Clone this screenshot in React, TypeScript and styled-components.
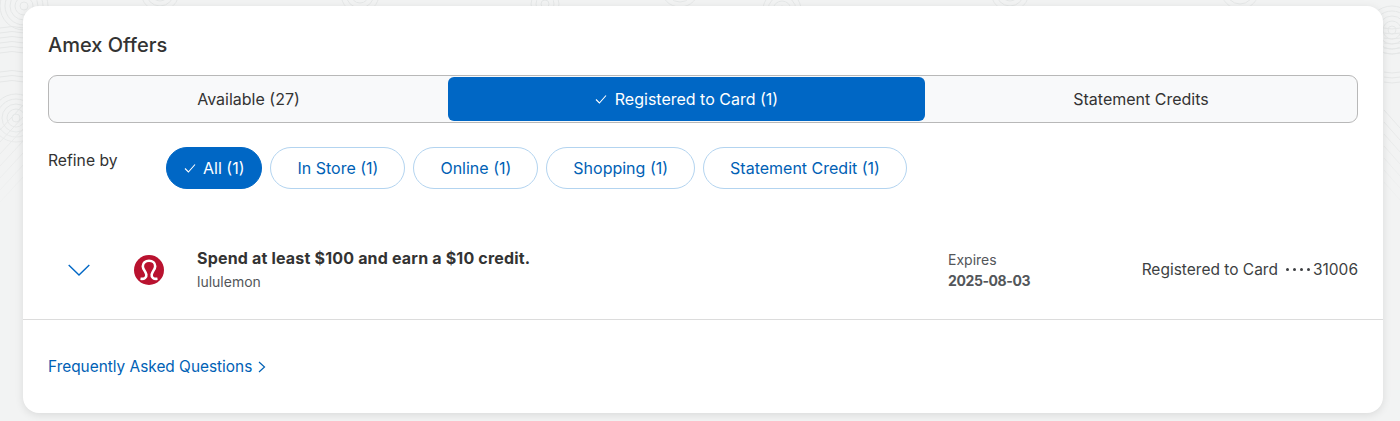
import styled, { createGlobalStyle } from "styled-components";

const GlobalStyle = createGlobalStyle`
  html, body {
    margin: 0;
    padding: 0;
    background: #f2f3f3;
  }
  body {
    font-family: Inter, "Liberation Sans", sans-serif;
    color: #333;
  }
`;

const Page = styled.div`
  position: relative;
  width: 1400px;
  height: 421px;
  overflow: hidden;
  padding: 6px 17px 8px 23px;
  box-sizing: border-box;
`;

const Backdrop = styled.svg`
  position: absolute;
  left: 0;
  top: 0;
  width: 1400px;
  height: 421px;
  -webkit-mask-image: linear-gradient(to bottom, #000 110px, transparent 215px);
  mask-image: linear-gradient(to bottom, #000 110px, transparent 215px);
`;

const Card = styled.div`
  position: relative;
  height: 407px;
  box-sizing: border-box;
  background: #fff;
  border-radius: 16px;
  box-shadow: 0 2px 8px rgba(0, 0, 0, 0.1);
  padding-top: 28px;
`;

const Inset = styled.div`
  padding: 0 25px;
`;

const Title = styled.h2`
  margin: 0 0 19px;
  font-size: 20px;
  line-height: 22px;
  font-weight: 500;
  color: #333;
`;

const Tabs = styled.div`
  display: grid;
  grid-template-columns: 399px 477px 1fr;
  height: 48px;
  box-sizing: border-box;
  border: 1px solid #b8b8b8;
  border-radius: 9px;
  background: #f8f9fa;
  padding: 1px 0;
`;

const Tab = styled.div<{ $active?: boolean }>`
  display: flex;
  align-items: center;
  justify-content: center;
  gap: 8px;
  font-size: 16px;
  border-radius: 6px;
  background: ${(p) => (p.$active ? "#0067c5" : "transparent")};
  color: ${(p) => (p.$active ? "#fff" : "#333")};
`;

const Refine = styled.div`
  display: flex;
  margin-top: 24px;
`;

const RefineLabel = styled.div`
  width: 118px;
  font-size: 15.7px;
  line-height: 18px;
  padding-top: 5px;
`;

const Chips = styled.div`
  display: flex;
  gap: 8px;
`;

const Chip = styled.div<{ $active?: boolean }>`
  display: flex;
  align-items: center;
  gap: 7px;
  height: 42px;
  box-sizing: border-box;
  padding: 0 ${(p) => (p.$active ? "17px" : "26px")};
  font-size: 16px;
  border-radius: 21px;
  border: 1px solid ${(p) => (p.$active ? "#0067c5" : "#b3d4f0")};
  background: ${(p) => (p.$active ? "#0067c5" : "#fff")};
  color: ${(p) => (p.$active ? "#fff" : "#0061b5")};
`;

const OfferRow = styled.div`
  display: flex;
  align-items: center;
  height: 101px;
  margin-top: 30px;
  padding: 0 25px;
  border-bottom: 1px solid #dcdcdc;
  box-sizing: border-box;
`;

const Toggle = styled.div`
  width: 86px;
  display: flex;
  padding: 2px 0 0 20px;
  box-sizing: border-box;
`;

const Logo = styled.div`
  width: 63px;
  display: flex;
  padding-top: 2px;
`;

const OfferBody = styled.div`
  flex: 1;
`;

const OfferTitle = styled.div`
  font-size: 16px;
  line-height: 20px;
  font-weight: 700;
  letter-spacing: 0.18px;
  color: #333;
`;

const Merchant = styled.div`
  font-size: 14px;
  line-height: 16px;
  margin-top: 6px;
  color: #53565a;
`;

const Expiry = styled.div`
  width: 194px;
  padding-top: 3px;
`;

const ExpiryLabel = styled.div`
  font-size: 14px;
  line-height: 16px;
  color: #53565a;
`;

const ExpiryDate = styled.div`
  font-size: 14px;
  line-height: 18px;
  margin-top: 4px;
  font-weight: 700;
  letter-spacing: -0.4px;
  color: #53565a;
`;

const Status = styled.div`
  width: 216px;
  display: flex;
  justify-content: flex-end;
  align-items: center;
  font-size: 15.5px;
  color: #3d3f42;
  white-space: nowrap;
`;

const Dots = styled.span`
  display: inline-flex;
  gap: 4px;
  margin: 1px 3px 0 8px;
`;

const Dot = styled.i`
  width: 3px;
  height: 3px;
  border-radius: 50%;
  background: #3d3f42;
`;

const FaqLink = styled.a`
  display: flex;
  align-items: center;
  gap: 6px;
  margin-top: 37px;
  font-size: 15.4px;
  line-height: 20px;
  color: #0061b5;
  text-decoration: none;
`;

const Check = ({ size = 12 }: { size?: number }) => (
  <svg width={size} height={size} viewBox="0 0 12 12" fill="none">
    <path d="M1 6.500 4.400 10 11 2.500" stroke="#fff" strokeWidth="1.1" />
  </svg>
);

// faint engraved pattern behind the card, only visible in the margins
const swirls = [
  { cx: 24, cy: 6, n: 5 },
  { cx: 160, cy: -8, n: 4 },
  { cx: 360, cy: -6, n: 4 },
  { cx: 545, cy: 4, n: 3 },
  { cx: 680, cy: -12, n: 4 },
  { cx: 782, cy: 10, n: 4 },
  { cx: 1010, cy: -8, n: 4 },
  { cx: 1240, cy: -10, n: 4 },
  { cx: 1392, cy: 30, n: 5 },
  { cx: 16, cy: 118, n: 5 },
];

const bands = [28, 33, 38, 43, 48, 53, 72, 77, 82];
const hatches = [130, 142, 154, 166, 178, 190, 202];

const refineOptions = ["In Store (1)", "Online (1)", "Shopping (1)", "Statement Credit (1)"];

const App = () => {
  return (
    <>
      <GlobalStyle />
      <Page>
        <Backdrop viewBox="0 0 1400 421" fill="none" stroke="#e5e7e7" strokeWidth="1">
          {swirls.map((a) =>
            Array.from({ length: a.n }).map((_, i) => (
              <circle key={`${a.cx}-${i}`} cx={a.cx} cy={a.cy} r={4 + i * 5} />
            ))
          )}
          {bands.map((y) => (
            <path key={y} d={`M0 ${y}q12 -3 24 0M1384 ${y}q8 2 16 0`} />
          ))}
          {hatches.map((y) => (
            <path key={y} d={`M0 ${y}l24 -26M1384 ${y - 20}l16 18`} />
          ))}
        </Backdrop>
        <Card>
          <Inset>
            <Title>Amex Offers</Title>
            <Tabs>
              <Tab>Available (27)</Tab>
              <Tab $active>
                <Check />
                Registered to Card (1)
              </Tab>
              <Tab>Statement Credits</Tab>
            </Tabs>
            <Refine>
              <RefineLabel>Refine by</RefineLabel>
              <Chips>
                <Chip $active>
                  <Check />
                  All (1)
                </Chip>
                {refineOptions.map((label) => (
                  <Chip key={label}>{label}</Chip>
                ))}
              </Chips>
            </Refine>
          </Inset>
          <OfferRow>
            <Toggle>
              <svg width="22" height="12" viewBox="0 0 22 12" fill="none">
                <path d="M0.700 1 11 11 21.300 1" stroke="#0067c5" strokeWidth="1.400" />
              </svg>
            </Toggle>
            <Logo>
              <svg width="30" height="30" viewBox="0 0 30 30" fill="none">
                <circle cx="15" cy="15" r="15" fill="#b9122f" />
                <path
                  d="M6.500 23.800C10.500 24.300 12.800 22.500 12.300 19.500 11.700 16.200 8.800 14.500 8.800 11.200 8.800 7.800 11.500 5.700 15 5.700S21.200 7.800 21.200 11.200C21.200 14.500 18.300 16.200 17.700 19.500 17.200 22.500 19.500 24.300 23.500 23.800"
                  stroke="#fff"
                  strokeWidth="2.600"
                />
              </svg>
            </Logo>
            <OfferBody>
              <OfferTitle>Spend at least $100 and earn a $10 credit.</OfferTitle>
              <Merchant>lululemon</Merchant>
            </OfferBody>
            <Expiry>
              <ExpiryLabel>Expires</ExpiryLabel>
              <ExpiryDate>2025-08-03</ExpiryDate>
            </Expiry>
            <Status>
              Registered to Card
              <Dots>
                <Dot />
                <Dot />
                <Dot />
                <Dot />
              </Dots>
              31006
            </Status>
          </OfferRow>
          <Inset>
            <FaqLink href="#">
              Frequently Asked Questions
              <svg width="8" height="12" viewBox="0 0 8 12" fill="none">
                <path d="M1 1 6.500 6 1 11" stroke="#0061b5" strokeWidth="1.200" />
              </svg>
            </FaqLink>
          </Inset>
        </Card>
      </Page>
    </>
  );
};

export default App;
